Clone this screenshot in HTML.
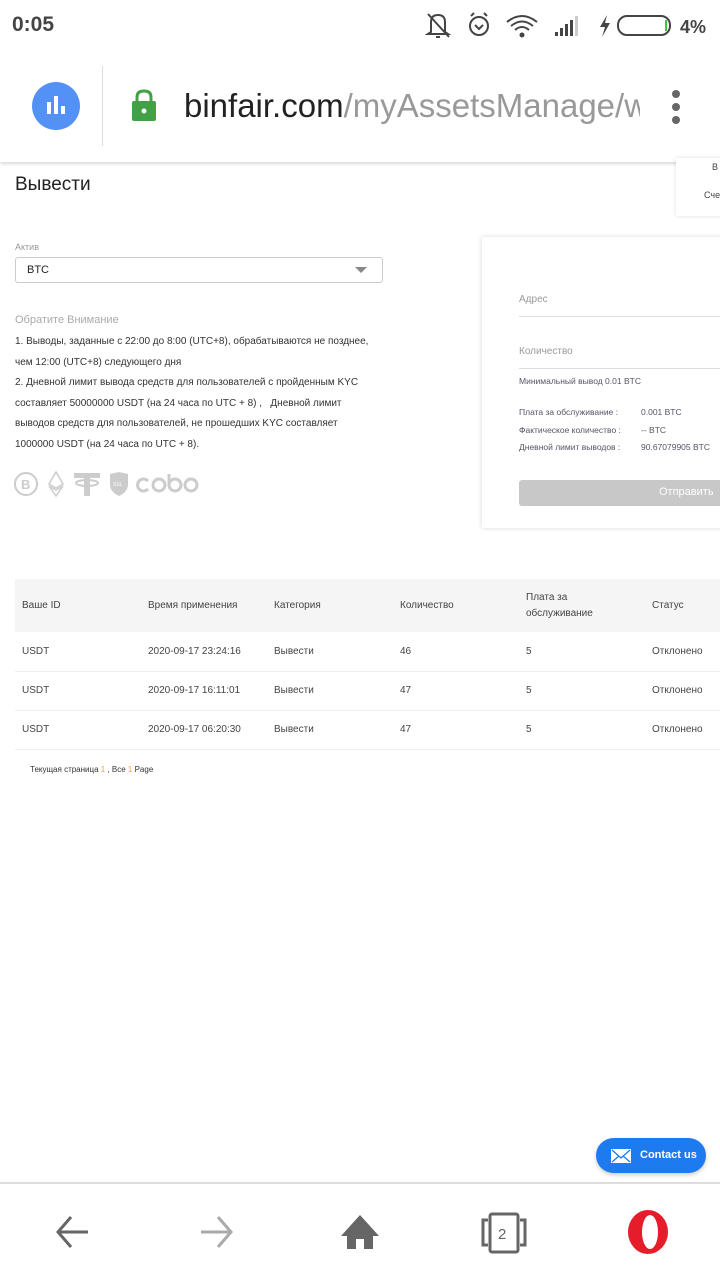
<!DOCTYPE html>
<html><head><meta charset="utf-8"><style>
*{margin:0;padding:0;box-sizing:border-box}
body{width:720px;height:1280px;position:relative;background:#fff;font-family:"Liberation Sans",sans-serif;overflow:hidden;color:#333}
.a{position:absolute}
.t{font-size:10px;color:#444}
</style></head><body>
<!-- status bar -->
<div class="a" style="left:12px;top:13px;font-size:21px;font-weight:bold;color:#444">0:05</div>
<svg class="a" style="left:425px;top:10px" width="290" height="32" viewBox="0 0 290 32">
<g fill="none" stroke="#444" stroke-width="2">
<path d="M6 22 L6 12 Q6 5 13 5 Q20 5 20 12 L20 22 L23 24 L3 24 Z"/><path d="M3 4 L24 27"/><path d="M11 27 h4"/>
<circle cx="54" cy="16" r="9"/><path d="M50 15 l4 4 4-4"/><path d="M46 6 l3-3 M62 6 l-3-3"/>
<path d="M82 12 Q97 0 112 12 M86 16 Q97 7 108 16 M90 20 Q97 14 104 20"/>
</g>
<circle cx="97" cy="25" r="2.5" fill="#444"/>
<g fill="#444"><rect x="130" y="22" width="3" height="4"/><rect x="135" y="18" width="3" height="8"/><rect x="140" y="14" width="3" height="12"/><rect x="145" y="10" width="3" height="16"/></g>
<rect x="150" y="6" width="3" height="20" fill="#ccc"/>
<path d="M182 5 L175 17 H180 L177 27 L185 13 H180 Z" fill="#444"/>
<rect x="193" y="6" width="52" height="19" rx="9" fill="none" stroke="#444" stroke-width="2"/>
<rect x="240" y="10" width="2" height="11" fill="#3c3"/>
<text x="255" y="23" font-size="18" font-weight="bold" fill="#444" font-family="Liberation Sans">4%</text>
</svg>
<!-- address bar -->
<div class="a" style="left:0;top:52px;width:720px;height:110px;background:#fff;box-shadow:0 2px 3px rgba(0,0,0,.15)"></div>
<div class="a" style="left:32px;top:82px;width:48px;height:48px;border-radius:50%;background:#5391f7"></div>
<div class="a" style="left:47px;top:102px;width:4px;height:12px;background:#fff"></div>
<div class="a" style="left:54px;top:96px;width:4px;height:18px;background:#fff"></div>
<div class="a" style="left:61px;top:106px;width:4px;height:8px;background:#fff"></div>
<div class="a" style="left:102px;top:66px;width:1px;height:80px;background:#ddd"></div>
<svg class="a" style="left:130px;top:88px" width="28" height="34"><path d="M7 14 V9 Q7 3 14 3 Q21 3 21 9 V14" fill="none" stroke="#43a047" stroke-width="3"/><rect x="2" y="13" width="24" height="20" rx="2" fill="#43a047"/><circle cx="14" cy="23" r="2.5" fill="#fff"/></svg>
<div class="a" style="left:184px;top:87px;font-size:33px;color:#222;white-space:nowrap;width:456px;overflow:hidden">binfair.com<span style="color:#999">/myAssetsManage/w</span></div>
<div class="a" style="left:672px;top:90px;width:8px;height:8px;border-radius:50%;background:#666"></div>
<div class="a" style="left:672px;top:103px;width:8px;height:8px;border-radius:50%;background:#666"></div>
<div class="a" style="left:672px;top:116px;width:8px;height:8px;border-radius:50%;background:#666"></div>
<!-- top right popup -->
<div class="a" style="left:676px;top:158px;width:60px;height:58px;background:#fff;box-shadow:0 0 4px rgba(0,0,0,.12)"></div>
<div class="a" style="left:712px;top:162px;font-size:9px;color:#444">В</div>
<div class="a" style="left:704px;top:190px;font-size:9px;color:#444">Сче</div>
<!-- title -->
<div class="a" style="left:15px;top:174px;font-size:19px;color:#222">Вывести</div>
<div class="a" style="left:15px;top:242px;font-size:9px;color:#999">Актив</div>
<div class="a" style="left:15px;top:257px;width:368px;height:26px;border:1px solid #ccc;border-radius:3px"></div>
<div class="a" style="left:27px;top:264px;font-size:11px;color:#222">BTC</div>
<div class="a" style="left:355px;top:267px;width:0;height:0;border-left:6px solid transparent;border-right:6px solid transparent;border-top:6px solid #888"></div>
<div class="a" style="left:15px;top:314px;font-size:11px;color:#aaa">Обратите Внимание</div>
<div class="a t" style="left:15px;top:332px;white-space:nowrap;line-height:20.5px;font-size:10px;color:#333">1. Выводы, заданные с 22:00 до 8:00 (UTC+8), обрабатываются не позднее,<br>чем 12:00 (UTC+8) следующего дня<br>2. Дневной лимит вывода средств для пользователей с пройденным KYC<br>составляет 50000000 USDT (на 24 часа по UTC + 8) ,&nbsp;&nbsp; Дневной лимит<br>выводов средств для пользователей, не прошедших KYC составляет<br>1000000 USDT (на 24 часа по UTC + 8).</div>
<svg class="a" style="left:14px;top:470px" width="190" height="28" viewBox="0 0 190 28">
<g fill="none" stroke="#ccc" stroke-width="2"><circle cx="12" cy="14" r="11"/></g>
<text x="7" y="19" font-size="13" font-weight="bold" fill="#ccc" font-family="Liberation Sans">B</text>
<path d="M42 2 L35 14 L42 18 L49 14 Z M35 16 L42 26 L49 16 L42 20 Z" fill="none" stroke="#ccc" stroke-width="1.5"/>
<path d="M60 3 H86 V8 H76 V26 H70 V8 H60 Z" fill="#ccc"/><ellipse cx="73" cy="13" rx="11" ry="3" fill="none" stroke="#ccc" stroke-width="2"/>
<path d="M96 4 L105 2 L114 4 V14 Q114 22 105 26 Q96 22 96 14 Z" fill="#ccc"/><text x="99" y="16" font-size="5" fill="#fff" font-family="Liberation Sans">SSL</text>
<g fill="none" stroke="#ccc" stroke-width="3"><path d="M134 11 A6 6 0 1 0 134 19"/><circle cx="145" cy="15" r="6"/><circle cx="161" cy="15" r="6"/><path d="M155 4 V15"/><circle cx="177" cy="15" r="6"/></g>
</svg>
<!-- right card -->
<div class="a" style="left:482px;top:237px;width:260px;height:291px;background:#fff;box-shadow:0 0 5px rgba(0,0,0,.15)"></div>
<div class="a" style="left:519px;top:294px;font-size:10px;color:#999">Адрес</div>
<div class="a" style="left:519px;top:316px;width:201px;height:1px;background:#ddd"></div>
<div class="a" style="left:519px;top:346px;font-size:10px;color:#999">Количество</div>
<div class="a" style="left:519px;top:368px;width:201px;height:1px;background:#ddd"></div>
<div class="a" style="left:519px;top:376px;font-size:8.5px;color:#556">Минимальный вывод 0.01 BTC</div>
<div class="a" style="left:519px;top:404px;font-size:8.5px;color:#556;line-height:17.5px">Плата за обслуживание :<br>Фактическое количество :<br>Дневной лимит выводов :</div>
<div class="a" style="left:641px;top:404px;font-size:8.5px;color:#556;line-height:17.5px">0.001 BTC<br>-- BTC<br>90.67079905 BTC</div>
<div class="a" style="left:519px;top:480px;width:210px;height:26px;background:#c8c8c8;border-radius:3px"></div>
<div class="a" style="left:659px;top:486px;font-size:11px;color:#fff">Отправить</div>
<!-- table -->
<div class="a" style="left:15px;top:579px;width:705px;height:53px;background:#f5f5f5"></div>
<div class="a" style="left:15px;top:671px;width:705px;height:1px;background:#eee"></div>
<div class="a" style="left:15px;top:710px;width:705px;height:1px;background:#eee"></div>
<div class="a" style="left:15px;top:749px;width:705px;height:1px;background:#eee"></div>
<div class="a t" style="left:22px;top:600px">Ваше ID</div>
<div class="a t" style="left:148px;top:600px">Время применения</div>
<div class="a t" style="left:274px;top:600px">Категория</div>
<div class="a t" style="left:400px;top:600px">Количество</div>
<div class="a t" style="left:526px;top:590px;line-height:16px">Плата за<br>обслуживание</div>
<div class="a t" style="left:652px;top:600px">Статус</div>
<div class="a t" style="left:22px;top:632px;line-height:39px">USDT<br>USDT<br>USDT</div>
<div class="a t" style="left:148px;top:632px;line-height:39px">2020-09-17 23:24:16<br>2020-09-17 16:11:01<br>2020-09-17 06:20:30</div>
<div class="a t" style="left:274px;top:632px;line-height:39px">Вывести<br>Вывести<br>Вывести</div>
<div class="a t" style="left:400px;top:632px;line-height:39px">46<br>47<br>47</div>
<div class="a t" style="left:526px;top:632px;line-height:39px">5<br>5<br>5</div>
<div class="a t" style="left:652px;top:632px;line-height:39px">Отклонено<br>Отклонено<br>Отклонено</div>
<div class="a" style="left:30px;top:765px;font-size:8px;color:#333">Текущая страница <span style="color:#f5a623">1</span> , Все <span style="color:#f5a623">1</span> Page</div>
<!-- contact -->
<div class="a" style="left:596px;top:1138px;width:110px;height:35px;border-radius:18px;background:#1e7bef;box-shadow:0 2px 4px rgba(0,0,0,.2)"></div>
<svg class="a" style="left:610px;top:1148px" width="22" height="16"><rect x="1" y="1" width="20" height="14" fill="#fff"/><path d="M2 2 L11 10 L20 2 M2 14 L9 8 M20 14 L13 8" fill="none" stroke="#1e7bef" stroke-width="1.3"/></svg>
<div class="a" style="left:640px;top:1149px;font-size:11px;font-weight:bold;color:#fff">Contact us</div>
<!-- bottom nav -->
<div class="a" style="left:0;top:1182px;width:720px;height:2px;background:#ddd"></div>
<svg class="a" style="left:0;top:1185px" width="720" height="95">
<path d="M88 47 H58 M71 32 L58 47 L71 62" fill="none" stroke="#666" stroke-width="3"/>
<path d="M201 47 H231 M218 32 L231 47 L218 62" fill="none" stroke="#aaa" stroke-width="3"/>
<path d="M360 30 L341 51 H347 V64 H356 V54 H364 V64 H373 V51 H379 Z" fill="#666"/>
<rect x="490" y="29" width="28" height="38" rx="2" fill="none" stroke="#666" stroke-width="3"/>
<path d="M488 35 H483 V60 H488 M520 35 H525 V60 H520" fill="none" stroke="#666" stroke-width="3"/>
<text x="498" y="54" font-size="15" fill="#666" font-family="Liberation Sans">2</text>
<ellipse cx="648" cy="47" rx="20" ry="22" fill="#e51d2b"/>
<ellipse cx="650" cy="47" rx="8" ry="17" fill="#fff"/>
</svg>
</body></html>
